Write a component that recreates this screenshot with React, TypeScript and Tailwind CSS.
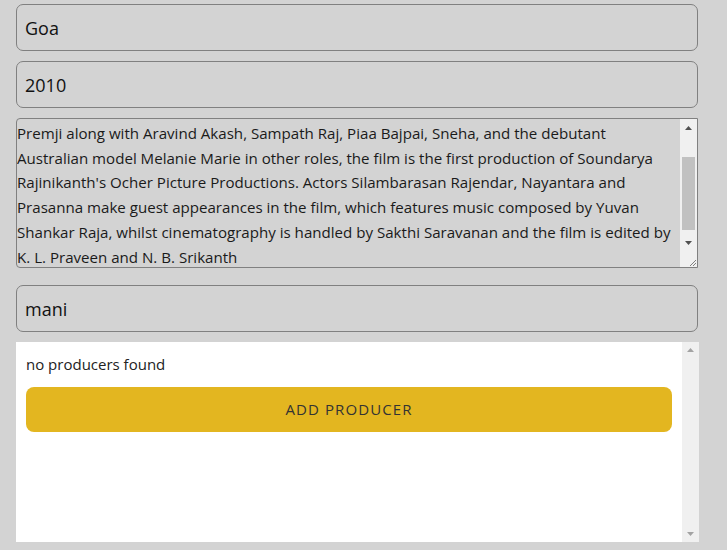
import React from "react";

const lines = [
  "Premji along with Aravind Akash, Sampath Raj, Piaa Bajpai, Sneha, and the debutant",
  "Australian model Melanie Marie in other roles, the film is the first production of Soundarya",
  "Rajinikanth's Ocher Picture Productions. Actors Silambarasan Rajendar, Nayantara and",
  "Prasanna make guest appearances in the film, which features music composed by Yuvan",
  "Shankar Raja, whilst cinematography is handled by Sakthi Saravanan and the film is edited by",
  "K. L. Praveen and N. B. Srikanth",
];

const font = { fontFamily: '"Open Sans", "Noto Sans", sans-serif' };

function Field({ value }: { value: string }) {
  return (
    <div className="w-[682px] h-[47px] border border-[#808080] rounded-[7px] flex items-center pl-[8px] pt-[1px] text-[18px] text-[#111]">
      {value}
    </div>
  );
}

function Arrow({ dir, color }: { dir: "up" | "down"; color: string }) {
  return (
    <svg width="7" height="4" viewBox="0 0 7 4">
      {dir === "up" ? (
        <path d="M0 4 L3.5 0 L7 4 Z" fill={color} />
      ) : (
        <path d="M0 0 L3.5 4 L7 0 Z" fill={color} />
      )}
    </svg>
  );
}

export default function App() {
  return (
    <div className="w-full h-[550px] bg-[#d3d3d3] pl-4 pt-1 overflow-hidden" style={font}>
      <div className="flex flex-col">
        <Field value="Goa" />
        <div className="h-[10px]" />
        <Field value="2010" />
        <div className="h-[10px]" />

        {/* description */}
        <div className="w-[682px] h-[150px] border border-[#808080] rounded-l-[4px] bg-[#d3d3d3] flex overflow-hidden">
          <div className="flex-1 pt-[2px] text-[15.1px] leading-[24.7px] text-[#1a1a1a] overflow-hidden">
            {lines.map((l, i) => (
              <div key={i} className="whitespace-nowrap">
                {l}
              </div>
            ))}
          </div>
          <div className="w-[17px] flex flex-col">
            <div className="flex-1 bg-[#f0f0f0] flex flex-col items-center">
              <div className="h-[17px] flex items-center justify-center">
                <Arrow dir="up" color="#505050" />
              </div>
              <div className="h-[21px]" />
              <div className="w-[13px] h-[73px] bg-[#c1c1c1]" />
              <div className="flex-1" />
              <div className="h-[17px] flex items-center justify-center">
                <Arrow dir="down" color="#505050" />
              </div>
            </div>
            <div className="h-[16px] bg-[#f0f0f0] relative">
              <svg className="absolute right-0 bottom-0" width="10" height="10" viewBox="0 0 10 10">
                <path d="M9 3 L3 9 M9 6 L6 9" stroke="#808080" strokeWidth="1" />
              </svg>
            </div>
          </div>
        </div>

        <div className="h-[17px]" />
        <Field value="mani" />
        <div className="h-[10px]" />

        {/* producers list */}
        <div className="w-[683px] h-[200px] bg-white flex">
          <div className="flex-1 px-[10px] pt-[10px]">
            <div className="text-[15px] leading-[24px] text-[#222]">no producers found</div>
            <div className="h-[11px]" />
            <button className="w-full h-[45px] bg-[#e3b620] rounded-[8px] text-[15px] tracking-[1.1px] text-[#333] flex items-center justify-center">
              ADD PRODUCER
            </button>
          </div>
          <div className="w-[17px] bg-[#f0f0f0] flex flex-col items-center justify-between py-[6px]">
            <Arrow dir="up" color="#a3a3a3" />
            <Arrow dir="down" color="#a3a3a3" />
          </div>
        </div>
      </div>
    </div>
  );
}
